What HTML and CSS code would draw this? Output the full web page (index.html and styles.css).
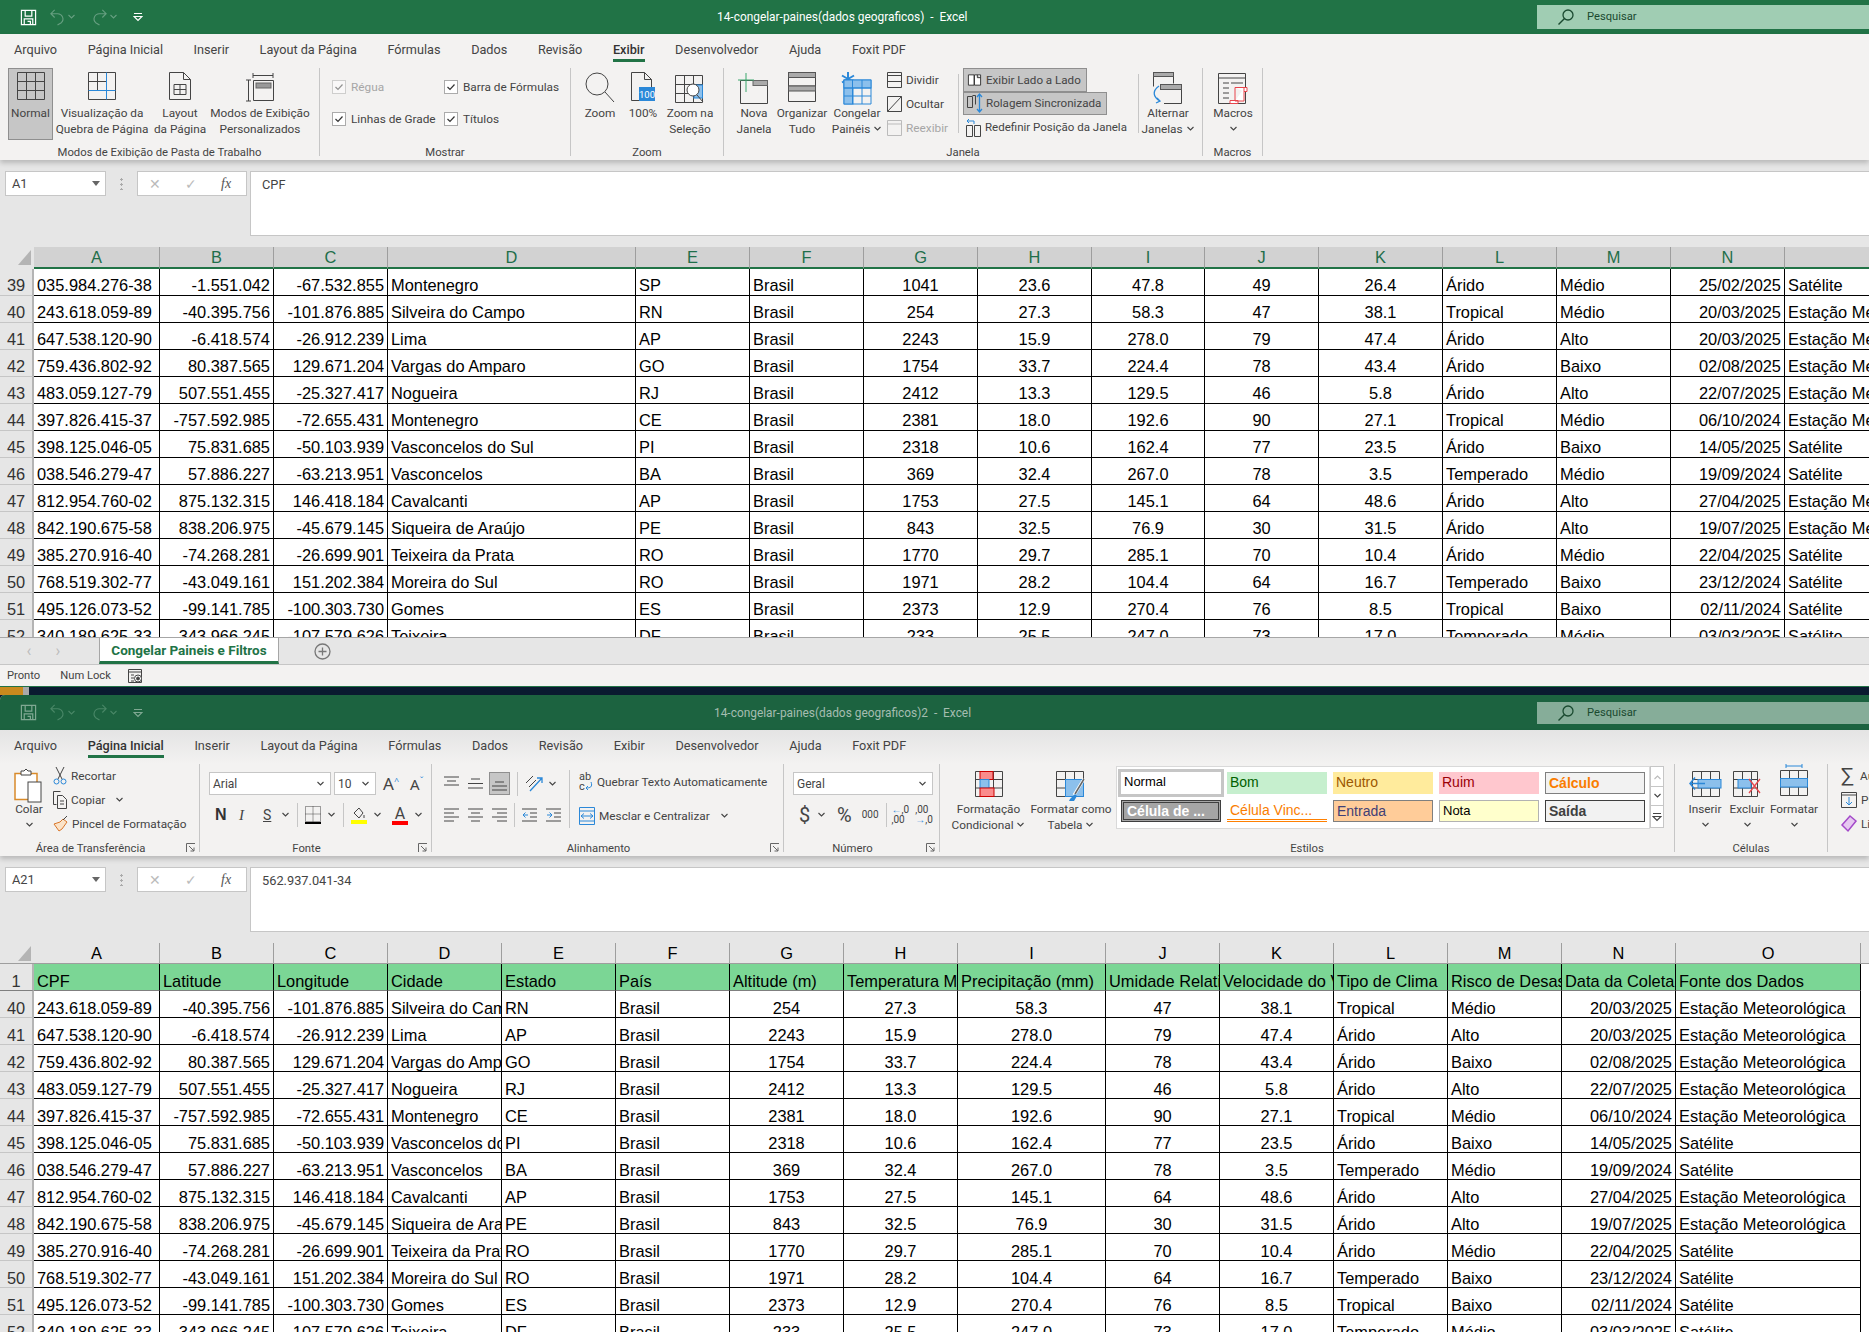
FILE: index.html
```html
<!DOCTYPE html>
<html lang="pt-BR">
<head>
<meta charset="utf-8">
<title>Excel</title>
<link rel="stylesheet" href="styles.css">
</head>
<body>
<svg class="defs" aria-hidden="true">
<symbol id="chev" viewBox="0 0 9 6"><path d="M1.500 1l3 3 3-3" fill="none" stroke="currentColor" stroke-width="1.100"/></symbol>
<symbol id="save" viewBox="0 0 18 18"><path d="M1.500 1.500h15v15h-15zM5.500 1.500v6h7v-6M4.500 16.500v-6h9v6M8 13h3v3.500" fill="none" stroke="currentColor" stroke-width="1.300"/></symbol>
<symbol id="undo" viewBox="0 0 18 18"><path d="M6 1L2 5l4 4M2 5h7a5.500 5.500 0 0 1 4 9.500L9 17" fill="none" stroke="currentColor" stroke-width="1.200"/></symbol>
<symbol id="redo" viewBox="0 0 18 18"><path d="M12 1l4 4-4 4M16 5H9a5.500 5.500 0 0 0-4 9.500L9 17" fill="none" stroke="currentColor" stroke-width="1.200"/></symbol>
<symbol id="cust" viewBox="0 0 10 10"><path d="M1 1.500h8M1 4.500h8L5 8.500z" fill="none" stroke="currentColor" stroke-width="1.200"/></symbol>
<symbol id="lens" viewBox="0 0 18 18"><circle cx="11" cy="7" r="5" fill="none" stroke="currentColor" stroke-width="1.300"/><path d="M7.500 10.500L1.500 16.500" stroke="currentColor" stroke-width="1.500"/></symbol>
<symbol id="check" viewBox="0 0 14 14"><rect x=".5" y=".5" width="13" height="13" fill="#fff" stroke="#ababab"/><path d="M3.500 7l2.500 2.500 4.500-5" fill="none" stroke="#333" stroke-width="1.200"/></symbol>
<symbol id="pages" viewBox="0 0 16 16"><path d="M1.500 2.500h6v11h-6zM8 2.500h6.500v11H8zM11 2.500v3h3.500" fill="#fff" stroke="#333"/></symbol>
<symbol id="launch" viewBox="0 0 10 10"><path d="M.5 9V.5H9M3 3l5 5M8 4.500V8H4.500" fill="none" stroke="#666"/></symbol>
</svg>

<section class="win win-a">
  <header class="titlebar tb-a">
    <div class="qat">
      <svg class="q-save"><use href="#save"/></svg>
      <svg class="q-undo dim"><use href="#undo"/></svg><svg class="c8 dim"><use href="#chev"/></svg>
      <svg class="q-undo dim"><use href="#redo"/></svg><svg class="c8 dim"><use href="#chev"/></svg>
      <svg class="q-cust"><use href="#cust"/></svg>
    </div>
    <div class="doc">14-congelar-paines(dados geograficos)&nbsp; -&nbsp; Excel</div>
    <div class="search"><svg class="s-lens"><use href="#lens"/></svg><span>Pesquisar</span></div>
  </header>
  <div class="ribbon">
    <nav class="tabs">
      <span>Arquivo</span><span>Página Inicial</span><span>Inserir</span><span>Layout da Página</span><span>Fórmulas</span><span>Dados</span><span>Revisão</span><span class="act">Exibir</span><span>Desenvolvedor</span><span>Ajuda</span><span>Foxit PDF</span>
    </nav>
    <div class="groups">
      <div class="grp w320">
        <div class="gbody pl8">
          <div class="big w45 on"><div class="ibox"><svg width="28" height="28" viewBox="0 0 28 28" class="ln"><path d="M.5.500h27v27H.5zM9.500.500v27M18.500.500v27M.5 9.500h27M.5 18.500h27"/></svg></div>Normal</div>
          <div class="big w98"><div class="ibox"><svg width="28" height="28" viewBox="0 0 28 28" class="ln"><path d="M.5.500h27v27H.5zM9.500.500v18M.5 9.500h18"/><path class="bl" d="M18.500.500v27M.5 18.500h27"/></svg></div>Visualização da<br>Quebra de Página</div>
          <div class="big w58"><div class="ibox"><svg width="22" height="28" viewBox="0 0 22 28" class="ln"><path d="M.5.500h14l7 7v20H.5zM14.500.500v7h7M5 12.500h12v10H5zM5 17.500h12M11 12.500v10"/></svg></div>Layout<br>da Página</div>
          <div class="big w102"><div class="ibox"><svg width="30" height="30" viewBox="0 0 30 30" class="ln"><path d="M8 1v5M28 1v5M8 3.500h20M1 8h5M1 29h5M3.500 8v21M8.500 8.500h20v20h-20z"/><rect x="11" y="11" width="15" height="5" fill="#999" stroke="#666"/></svg></div>Modos de Exibição<br>Personalizados</div>
        </div>
        <div class="glabel">Modos de Exibição de Pasta de Trabalho</div>
      </div>
      <div class="grp w251">
        <div class="gbody checks">
          <label class="chk off"><svg class="box"><use href="#check"/></svg>Régua</label>
          <label class="chk"><svg class="box"><use href="#check"/></svg>Barra de Fórmulas</label>
          <label class="chk"><svg class="box"><use href="#check"/></svg>Linhas de Grade</label>
          <label class="chk"><svg class="box"><use href="#check"/></svg>Títulos</label>
        </div>
        <div class="glabel">Mostrar</div>
      </div>
      <div class="grp w153">
        <div class="gbody pl8">
          <div class="big w42"><div class="ibox"><svg width="30" height="31" viewBox="0 0 30 31" class="ln"><circle cx="12" cy="12" r="11"/><path d="M20 20l9 10"/></svg></div>Zoom</div>
          <div class="big w44"><div class="ibox"><svg width="24" height="30" viewBox="0 0 24 30" class="ln"><path d="M.5.500h13l7 7v21H.5zM13.500.500v7h7"/><rect x="8" y="15" width="16" height="14" fill="#2b88d8" stroke="none"/><text x="16" y="26" class="t100">100</text></svg></div>100%</div>
          <div class="big w50"><div class="ibox"><svg width="30" height="31" viewBox="0 0 30 31" class="ln"><path d="M.5 3.500h27v27H.5zM9.500 3.500v27M18.500 3.500v27M.5 12.500h27M.5 21.500h27"/><rect x="19" y="13" width="8.500" height="13" fill="#8cc0ec" stroke="#2b88d8"/><circle cx="18" cy="18" r="6" fill="#fff"/><path d="M22 23l6 7"/></svg></div>Zoom na<br>Seleção</div>
        </div>
        <div class="glabel">Zoom</div>
      </div>
      <div class="grp w479">
        <div class="gbody pl10">
          <div class="big w40"><div class="ibox"><svg width="30" height="32" viewBox="0 0 30 32" class="ln"><path d="M1.500 8.500h27v23h-27z"/><rect x="14" y="8.500" width="14.500" height="5" fill="#aaa" stroke="#666"/><path class="gr" d="M7 1v19M-1 8h16"/></svg></div>Nova<br>Janela</div>
          <div class="big w56"><div class="ibox"><svg width="28" height="30" viewBox="0 0 28 30" class="ln"><path d="M.5.500h27v29H.5zM.5 14h27"/><rect x=".5" y=".5" width="27" height="5" fill="#aaa" stroke="#555"/><rect x=".5" y="14" width="27" height="5" fill="#aaa" stroke="#555"/></svg></div>Organizar<br>Tudo</div>
          <div class="big w54"><div class="ibox"><svg width="30" height="32" viewBox="0 0 30 32" class="ln"><path class="bl" d="M6 0v14M0 3.500l12 7M0 10.500l12-7" stroke-width="2"/><path d="M2 18.500V8h27v24H2z" stroke="#2b88d8"/><rect x="2" y="8" width="9" height="24" fill="#8cc0ec" stroke="#2b88d8"/><rect x="2" y="8" width="27" height="8" fill="#8cc0ec" stroke="#2b88d8"/><path d="M10.500 8v24M20 8v24M2 16h27M2 24h27" stroke="#2b88d8"/></svg></div>Congelar<br>Painéis <svg class="c8"><use href="#chev"/></svg></div>
          <div class="smalls w74 pl3">
            <div class="sm"><svg width="15" height="18" viewBox="0 0 15 18" class="ln"><path d="M.5 1.500h14v15H.5zM.5 4.500h14M.5 10.500h14"/></svg>Dividir</div>
            <div class="sm"><svg width="15" height="18" viewBox="0 0 15 18" class="ln"><path d="M.5 1.500h14v15H.5zM.5 16.500l14-15"/></svg>Ocultar</div>
            <div class="sm off"><svg width="15" height="18" viewBox="0 0 15 18" class="ln faint"><path d="M.5 1.500h14v15H.5zM.5 5h14"/></svg>Reexibir</div>
          </div>
          <div class="vsep"></div>
          <div class="smalls w175 ml4">
            <div class="sm on"><svg class="i15"><use href="#pages"/></svg>Exibir Lado a Lado</div>
            <div class="sm on"><svg width="15" height="20" viewBox="0 0 15 20" class="ln"><path d="M.5 3.500h5v11h-5zM5.500 2.500h3v9"/><path class="bl" d="M12.500 1v18M10 4l2.500-3 2.500 3M10 16l2.500 3 2.500-3" stroke-width="1.300"/></svg>Rolagem Sincronizada</div>
            <div class="sm rst"><svg width="15" height="20" viewBox="0 0 15 20" class="ln"><path d="M.5 8.500h6v11h-6zM8.500 8.500h6v11h-6z"/><path class="bl" d="M1 4h7v3M1 4l2-2M1 4l2 2"/></svg>Redefinir Posição da Janela</div>
          </div>
          <div class="vsep"></div>
          <div class="big w56 ml1"><div class="ibox"><svg width="30" height="32" viewBox="0 0 30 32" class="ln"><path d="M.5.500h20v11M.5.500v14"/><rect x=".5" y=".5" width="20" height="4" fill="#aaa" stroke="#555"/><path d="M7.500 12.500h21v19H11"/><rect x="7.500" y="12.500" width="21" height="5" fill="#aaa" stroke="#555"/><path class="bl" d="M6 14c-7 5-6 11 1 15M4 26l3 3-4 2" stroke-width="1.300"/></svg></div>Alternar<br>Janelas <svg class="c8"><use href="#chev"/></svg></div>
        </div>
        <div class="glabel">Janela</div>
      </div>
      <div class="grp w60">
        <div class="gbody">
          <div class="big w60"><div class="ibox"><svg width="32" height="32" viewBox="0 0 32 32" class="ln"><path d="M1.500 1.500h27v30h-27zM1.500 6h27M6 11h6M14 11h12M6 16h6M6 21h6M6 26h6"/><path d="M18 15.500h12v4h-3M18 15.500v13M27 16v13H18M13 28.500h8v3h-8z" fill="#fff" stroke="#e8454c"/></svg></div>Macros<br><svg class="c8"><use href="#chev"/></svg></div>
        </div>
        <div class="glabel">Macros</div>
      </div>
    </div>
  </div>
  <div class="fbar">
    <div class="namebox"><span>A1</span><i class="tri"></i></div>
    <div class="dots"></div>
    <div class="fxbox"><span class="fx-x">✕</span><span class="fx-c">✓</span><span class="fx-f">fx</span></div>
    <div class="fval">CPF</div>
  </div>
  <div class="sheet s-a">
<table class="grid g-a">
<colgroup><col class="c-rh"><col class="c-a"><col class="c-n"><col class="c-n"><col class="c-d"><col class="c-n"><col class="c-n"><col class="c-n"><col class="c-n"><col class="c-i"><col class="c-n"><col class="c-k"><col class="c-n"><col class="c-n"><col class="c-n"><col class="c-o"></colgroup>
<thead><tr><th class="corner"><svg width="13" height="16" viewBox="0 0 13 16"><path d="M0 16L13 1v15z"/></svg><th>A<th>B<th>C<th>D<th>E<th>F<th>G<th>H<th>I<th>J<th>K<th>L<th>M<th>N<th>O</thead>
<tbody>
<tr><th>39<td>035.984.276-38<td>-1.551.042<td>-67.532.855<td>Montenegro<td>SP<td>Brasil<td>1041<td>23.6<td>47.8<td>49<td>26.4<td>Árido<td>Médio<td>25/02/2025<td>Satélite
<tr><th>40<td>243.618.059-89<td>-40.395.756<td>-101.876.885<td>Silveira do Campo<td>RN<td>Brasil<td>254<td>27.3<td>58.3<td>47<td>38.1<td>Tropical<td>Médio<td>20/03/2025<td>Estação Meteorológica
<tr><th>41<td>647.538.120-90<td>-6.418.574<td>-26.912.239<td>Lima<td>AP<td>Brasil<td>2243<td>15.9<td>278.0<td>79<td>47.4<td>Árido<td>Alto<td>20/03/2025<td>Estação Meteorológica
<tr><th>42<td>759.436.802-92<td>80.387.565<td>129.671.204<td>Vargas do Amparo<td>GO<td>Brasil<td>1754<td>33.7<td>224.4<td>78<td>43.4<td>Árido<td>Baixo<td>02/08/2025<td>Estação Meteorológica
<tr><th>43<td>483.059.127-79<td>507.551.455<td>-25.327.417<td>Nogueira<td>RJ<td>Brasil<td>2412<td>13.3<td>129.5<td>46<td>5.8<td>Árido<td>Alto<td>22/07/2025<td>Estação Meteorológica
<tr><th>44<td>397.826.415-37<td>-757.592.985<td>-72.655.431<td>Montenegro<td>CE<td>Brasil<td>2381<td>18.0<td>192.6<td>90<td>27.1<td>Tropical<td>Médio<td>06/10/2024<td>Estação Meteorológica
<tr><th>45<td>398.125.046-05<td>75.831.685<td>-50.103.939<td>Vasconcelos do Sul<td>PI<td>Brasil<td>2318<td>10.6<td>162.4<td>77<td>23.5<td>Árido<td>Baixo<td>14/05/2025<td>Satélite
<tr><th>46<td>038.546.279-47<td>57.886.227<td>-63.213.951<td>Vasconcelos<td>BA<td>Brasil<td>369<td>32.4<td>267.0<td>78<td>3.5<td>Temperado<td>Médio<td>19/09/2024<td>Satélite
<tr><th>47<td>812.954.760-02<td>875.132.315<td>146.418.184<td>Cavalcanti<td>AP<td>Brasil<td>1753<td>27.5<td>145.1<td>64<td>48.6<td>Árido<td>Alto<td>27/04/2025<td>Estação Meteorológica
<tr><th>48<td>842.190.675-58<td>838.206.975<td>-45.679.145<td>Siqueira de Araújo<td>PE<td>Brasil<td>843<td>32.5<td>76.9<td>30<td>31.5<td>Árido<td>Alto<td>19/07/2025<td>Estação Meteorológica
<tr><th>49<td>385.270.916-40<td>-74.268.281<td>-26.699.901<td>Teixeira da Prata<td>RO<td>Brasil<td>1770<td>29.7<td>285.1<td>70<td>10.4<td>Árido<td>Médio<td>22/04/2025<td>Satélite
<tr><th>50<td>768.519.302-77<td>-43.049.161<td>151.202.384<td>Moreira do Sul<td>RO<td>Brasil<td>1971<td>28.2<td>104.4<td>64<td>16.7<td>Temperado<td>Baixo<td>23/12/2024<td>Satélite
<tr><th>51<td>495.126.073-52<td>-99.141.785<td>-100.303.730<td>Gomes<td>ES<td>Brasil<td>2373<td>12.9<td>270.4<td>76<td>8.5<td>Tropical<td>Baixo<td>02/11/2024<td>Satélite
<tr><th>52<td>340.189.625-33<td>343.966.245<td>-107.579.626<td>Teixeira<td>DF<td>Brasil<td>233<td>25.5<td>247.0<td>73<td>17.0<td>Temperado<td>Médio<td>03/03/2025<td>Satélite
</tbody>
</table>
  </div>
  <div class="sheetbar">
    <span class="nav">‹</span><span class="nav">›</span>
    <div class="stab">Congelar Paineis e Filtros</div>
    <svg class="plus" width="17" height="17" viewBox="0 0 17 17"><circle cx="8.500" cy="8.500" r="7.500"/><path d="M8.500 4.500v8M4.500 8.500h8"/></svg>
  </div>
  <footer class="status"><span>Pronto</span><span>Num Lock</span><svg width="15" height="16" viewBox="0 0 15 16" class="ln"><path d="M.5 1.500h13v13H.5zM.5 4h13M3 7h3M3 10h3M3 13h3"/><circle cx="10" cy="10.500" r="3.500" fill="#fff"/><circle cx="10" cy="10.500" r="1.500" fill="#444"/></svg></footer>
</section>

<div class="strip"><i class="s-or"></i><i class="s-gr"></i></div>

<section class="win win-b">
  <header class="titlebar tb-b">
    <div class="qat">
      <svg class="q-save"><use href="#save"/></svg>
      <svg class="q-undo dim"><use href="#undo"/></svg><svg class="c8 dim"><use href="#chev"/></svg>
      <svg class="q-undo dim"><use href="#redo"/></svg><svg class="c8 dim"><use href="#chev"/></svg>
      <svg class="q-cust"><use href="#cust"/></svg>
    </div>
    <div class="doc">14-congelar-paines(dados geograficos)2&nbsp; -&nbsp; Excel</div>
    <div class="search"><svg class="s-lens"><use href="#lens"/></svg><span>Pesquisar</span></div>
  </header>
  <div class="ribbon rb-b">
    <nav class="tabs">
      <span>Arquivo</span><span class="act">Página Inicial</span><span>Inserir</span><span>Layout da Página</span><span>Fórmulas</span><span>Dados</span><span>Revisão</span><span>Exibir</span><span>Desenvolvedor</span><span>Ajuda</span><span>Foxit PDF</span>
    </nav>
    <div class="groups">
      <div class="grp w200">
        <div class="gbody pl8">
          <div class="big w42"><div class="ibox"><svg width="30" height="32" viewBox="0 0 30 32" class="ln"><path d="M1 5.500h22v26H1z" stroke="#d98b2b" fill="#fff" stroke-width="1.500"/><path d="M7 5V3h3l2-2 2 2h3v4H7z" fill="#fff"/><rect x="14" y="14" width="13" height="20" fill="#fff"/></svg></div>Colar<br><svg class="c8"><use href="#chev"/></svg></div>
          <div class="smalls w146 pl3">
            <div class="sm"><svg width="14" height="18" viewBox="0 0 14 18" class="ln"><path d="M3 0l6 12M11 0L5 12"/><circle cx="3.500" cy="14.500" r="2.500" stroke="#2b88d8"/><circle cx="10.500" cy="14.500" r="2.500" stroke="#2b88d8"/></svg>Recortar</div>
            <div class="sm"><svg width="14" height="18" viewBox="0 0 14 18" class="ln"><path d="M.5.500h7M.5.500v13h3M4.500 4.500h5l4 4v9h-9zM7 10h4M7 13h4"/></svg>Copiar &nbsp;<svg class="c8"><use href="#chev"/></svg></div>
            <div class="sm"><svg width="15" height="18" viewBox="0 0 15 18" class="ln"><path d="M1 9l5 7 3-2 5-7-4-3-3 3z" stroke="#d9772b" fill="#fbe3c8"/><path d="M10 5l4-4"/></svg>Pincel de Formatação</div>
          </div>
        </div>
        <div class="glabel lab-l">Área de Transferência<svg class="launch"><use href="#launch"/></svg></div>
      </div>
      <div class="grp w232">
        <div class="gbody col">
          <div class="frow fr1">
            <div class="sel w122"><span>Arial</span><svg class="c8"><use href="#chev"/></svg></div>
            <div class="sel w42"><span>10</span><svg class="c8"><use href="#chev"/></svg></div>
            <span class="grow">A<sup>^</sup></span><span class="shrink">A<sup>ˇ</sup></span>
          </div>
          <div class="frow fr2">
            <b class="fN">N</b><i class="fI">I</i><u class="fS">S</u><svg class="c8"><use href="#chev"/></svg>
            <span class="hsep"></span>
            <svg width="16" height="18" viewBox="0 0 16 18" class="ln"><path d="M.5.500h15v15H.5zM8 .5v15M.5 8h15" stroke-dasharray="1 1"/><path d="M0 17h16" stroke="#000" stroke-width="2"/></svg><svg class="c8"><use href="#chev"/></svg>
            <span class="hsep"></span>
            <svg width="16" height="18" viewBox="0 0 16 18" class="ln"><path d="M3 7l5-5 4 5-4 5zM13 9v3"/><rect x="0" y="14" width="16" height="4" fill="#ffff00" stroke="none"/></svg><svg class="c8"><use href="#chev"/></svg>
            <span class="fcolor">A</span><svg class="c8"><use href="#chev"/></svg>
          </div>
        </div>
        <div class="glabel lab-l">Fonte<svg class="launch"><use href="#launch"/></svg></div>
      </div>
      <div class="grp w352">
        <div class="gbody">
          <div class="acol">
            <div class="arow ar1">
              <svg class="al" viewBox="0 0 15 15"><path d="M0 1h15M3 5h9M0 9h15"/></svg>
              <svg class="al" viewBox="0 0 15 15"><path d="M3 3h9M0 7.500h15M0 12h15"/></svg>
              <span class="alon"><svg class="al" viewBox="0 0 15 15"><path d="M3 6h9M0 10h15M0 14h15"/></svg></span>
              <span class="hsep"></span>
              <svg width="18" height="18" viewBox="0 0 18 18" class="ln"><path d="M1 8l7-7M4 12l7-7"/><path class="bl" d="M5 16L17 3M12 3h5v5" stroke-width="1.300"/></svg><svg class="c8 tight"><use href="#chev"/></svg>
            </div>
            <div class="arow ar2">
              <svg class="al" viewBox="0 0 15 15"><path d="M0 1h15M0 5h10M0 9h15M0 13h10"/></svg>
              <svg class="al" viewBox="0 0 15 15"><path d="M0 1h15M3 5h9M0 9h15M3 13h9"/></svg>
              <svg class="al" viewBox="0 0 15 15"><path d="M0 1h15M5 5h10M0 9h15M5 13h10"/></svg>
              <span class="hsep"></span>
              <svg class="al" viewBox="0 0 15 15"><path d="M0 1h15M8 5h7M8 9h7M0 13h15"/><path class="bl" d="M6 7H1M3.500 4.500L1 7l2.500 2.500"/></svg>
              <svg class="al" viewBox="0 0 15 15"><path d="M0 1h15M8 5h7M8 9h7M0 13h15"/><path class="bl" d="M1 7h5M3.500 4.500L6 7 3.500 9.500"/></svg>
            </div>
          </div>
          <div class="vsep v2"></div>
          <div class="wrapcol">
            <div class="wr"><svg width="14" height="20" viewBox="0 0 14 20" class="ln"><text x="0" y="8" class="tab">ab</text><text x="0" y="18" class="tab">c</text><path class="bl" d="M12 10c2 5-1 6-5 6M9 14l-2 2 2 2"/></svg>Quebrar Texto Automaticamente</div>
            <div class="wr"><svg width="16" height="18" viewBox="0 0 16 18" class="ln"><path d="M.5.500h15v17H.5zM.5 4h15M.5 14h15" stroke="#2b88d8"/><path class="bl" d="M2 9h12M5 6.500L2 9l3 2.500M11 6.500L14 9l-3 2.500"/></svg>Mesclar e Centralizar <svg class="c8 ml8"><use href="#chev"/></svg></div>
          </div>
        </div>
        <div class="glabel lab-l">Alinhamento<svg class="launch"><use href="#launch"/></svg></div>
      </div>
      <div class="grp w156">
        <div class="gbody col">
          <div class="frow fr3"><div class="sel w140"><span>Geral</span><svg class="c8"><use href="#chev"/></svg></div></div>
          <div class="frow fr4">
            <span class="dol">$</span><svg class="c8"><use href="#chev"/></svg><span class="pct">%</span><span class="mil">000</span><span class="hsep"></span>
            <span class="dec"><em>←</em>,0<br>,00</span><span class="dec">,00<br><em>→</em>,0</span>
          </div>
        </div>
        <div class="glabel lab-l">Número<svg class="launch"><use href="#launch"/></svg></div>
      </div>
      <div class="grp w735">
        <div class="gbody pl8">
          <div class="big w81"><div class="ibox ib-s"><svg width="28" height="26" viewBox="0 0 28 26" class="ln"><path d="M.5.500h27v25H.5zM.5 8.500h27M.5 17h27M9.500.500v25M18.500.500v25"/><rect x="5" y=".5" width="13" height="8" fill="#fa8c8c" stroke="#c00"/><rect x="5" y="8.500" width="9" height="8.500" fill="#8cc0ec" stroke="#2b88d8"/><rect x="5" y="17" width="14" height="8.500" fill="#fa8c8c" stroke="#c00"/></svg></div>Formatação<br>Condicional <svg class="c8"><use href="#chev"/></svg></div>
          <div class="big w84"><div class="ibox ib-s"><svg width="30" height="32" viewBox="0 0 30 32" class="ln"><path d="M.5.500h27v25H.5zM.5 8.500h27M.5 17h27M9.500.500v25M18.500.500v25"/><rect x="9.500" y="8.500" width="18" height="17" fill="#8cc0ec" stroke="#2b88d8"/><path d="M28 8L18 24" stroke-width="3" stroke="#fff"/><path d="M28 8L19 23" stroke-width="1.500" stroke="#666"/><path d="M14 28l5-5 2 2-3 5h-5z" fill="#2b88d8" stroke="none"/></svg></div>Formatar como<br>Tabela <svg class="c8"><use href="#chev"/></svg></div>
          <div class="gallery">
            <div class="styles">
              <span class="st st-normal">Normal</span><span class="st st-bom">Bom</span><span class="st st-neu">Neutro</span><span class="st st-ruim">Ruim</span><span class="st st-calc">Cálculo</span>
              <span class="st st-cel">Célula de ...</span><span class="st st-vinc">Célula Vinc...</span><span class="st st-ent">Entrada</span><span class="st st-nota">Nota</span><span class="st st-said">Saída</span>
            </div>
            <div class="gscroll"><span class="gs1"><svg class="c8 up"><use href="#chev"/></svg></span><span class="gs2"><svg class="c8"><use href="#chev"/></svg></span><span class="gs3"><svg class="c8"><use href="#cust"/></svg></span></div>
          </div>
        </div>
        <div class="glabel">Estilos</div>
      </div>
      <div class="grp w153">
        <div class="gbody pl7">
          <div class="big w46"><div class="ibox ib-s"><svg width="32" height="26" viewBox="0 0 32 26" class="ln"><path d="M3.500.500h27v25h-27zM3.500 8.500h27M3.500 17h27M12.500.500v25M21.500.500v25"/><rect x="9" y="8.500" width="23" height="8.500" fill="#8cc0ec" stroke="#2b88d8"/><path class="bl" d="M16 12.500H1M6 6.500l-5 6 5 6" stroke-width="1.500"/></svg></div>Inserir<br><svg class="c8"><use href="#chev"/></svg></div>
          <div class="big w38"><div class="ibox ib-s"><svg width="28" height="26" viewBox="0 0 28 26" class="ln"><path d="M.5.500h24v25H.5zM.5 8.500h24M.5 17h24M9.500.500v25M18.500.500v25" /><rect x="5" y="8.500" width="13" height="8.500" fill="#8cc0ec" stroke="#2b88d8"/><path d="M16 8l11 14M27 8L16 22" stroke="#e8454c" stroke-width="1.300"/></svg></div>Excluir<br><svg class="c8"><use href="#chev"/></svg></div>
          <div class="big w56"><div class="ibox ib-t"><svg width="28" height="32" viewBox="0 0 28 32" class="ln"><path class="bl" d="M6 0v4M22 0v4M6 2h16"/><path d="M.5 6.500h27v25H.5zM.5 14.500h27M.5 23h27M9.500 6.500v25M18.500 6.500v25"/><rect x=".5" y="14.500" width="27" height="8.500" fill="#8cc0ec" stroke="#2b88d8"/></svg></div>Formatar<br><svg class="c8"><use href="#chev"/></svg></div>
        </div>
        <div class="glabel">Células</div>
      </div>
      <div class="grp grest">
        <div class="gbody">
          <div class="smalls pl12">
            <div class="sm s-sig"><span class="sig">∑</span>AutoSoma</div>
            <div class="sm"><svg width="16" height="16" viewBox="0 0 16 16" class="ln"><path d="M.5.500h15v15H.5zM.5 3h15"/><path class="bl" d="M8 5v8M5 10l3 3 3-3"/></svg>Preencher</div>
            <div class="sm"><svg width="16" height="18" viewBox="0 0 16 18" class="ln"><path d="M1 10l8-9 6 5-8 10z" stroke="#a349c9" fill="#e6c8f0" stroke-width="1.500"/></svg>Limpar</div>
          </div>
        </div>
        <div class="glabel"></div>
      </div>
    </div>
  </div>
  <div class="fbar">
    <div class="namebox"><span>A21</span><i class="tri"></i></div>
    <div class="dots"></div>
    <div class="fxbox"><span class="fx-x">✕</span><span class="fx-c">✓</span><span class="fx-f">fx</span></div>
    <div class="fval">562.937.041-34</div>
  </div>
  <div class="sheet">
<table class="grid g-b">
<colgroup><col class="c-rh"><col class="c-a"><col class="c-n"><col class="c-n"><col class="c-n"><col class="c-n"><col class="c-n"><col class="c-n"><col class="c-n"><col class="c-w"><col class="c-n"><col class="c-n"><col class="c-n"><col class="c-n"><col class="c-n"><col class="c-o"><col class="c-n"></colgroup>
<thead><tr><th class="corner"><svg width="13" height="16" viewBox="0 0 13 16"><path d="M0 16L13 1v15z"/></svg><th>A<th>B<th>C<th>D<th>E<th>F<th>G<th>H<th>I<th>J<th>K<th>L<th>M<th>N<th>O<th class="blank"></thead>
<tbody>
<tr class="head"><th>1<td>CPF<td>Latitude<td>Longitude<td>Cidade<td>Estado<td>País<td>Altitude (m)<td>Temperatura Média<td>Precipitação (mm)<td>Umidade Relativa<td>Velocidade do Vento<td>Tipo de Clima<td>Risco de Desastre<td>Data da Coleta<td>Fonte dos Dados
<tr><th>40<td>243.618.059-89<td>-40.395.756<td>-101.876.885<td>Silveira do Campo<td>RN<td>Brasil<td>254<td>27.3<td>58.3<td>47<td>38.1<td>Tropical<td>Médio<td>20/03/2025<td>Estação Meteorológica
<tr><th>41<td>647.538.120-90<td>-6.418.574<td>-26.912.239<td>Lima<td>AP<td>Brasil<td>2243<td>15.9<td>278.0<td>79<td>47.4<td>Árido<td>Alto<td>20/03/2025<td>Estação Meteorológica
<tr><th>42<td>759.436.802-92<td>80.387.565<td>129.671.204<td>Vargas do Amparo<td>GO<td>Brasil<td>1754<td>33.7<td>224.4<td>78<td>43.4<td>Árido<td>Baixo<td>02/08/2025<td>Estação Meteorológica
<tr><th>43<td>483.059.127-79<td>507.551.455<td>-25.327.417<td>Nogueira<td>RJ<td>Brasil<td>2412<td>13.3<td>129.5<td>46<td>5.8<td>Árido<td>Alto<td>22/07/2025<td>Estação Meteorológica
<tr><th>44<td>397.826.415-37<td>-757.592.985<td>-72.655.431<td>Montenegro<td>CE<td>Brasil<td>2381<td>18.0<td>192.6<td>90<td>27.1<td>Tropical<td>Médio<td>06/10/2024<td>Estação Meteorológica
<tr><th>45<td>398.125.046-05<td>75.831.685<td>-50.103.939<td>Vasconcelos do Sul<td>PI<td>Brasil<td>2318<td>10.6<td>162.4<td>77<td>23.5<td>Árido<td>Baixo<td>14/05/2025<td>Satélite
<tr><th>46<td>038.546.279-47<td>57.886.227<td>-63.213.951<td>Vasconcelos<td>BA<td>Brasil<td>369<td>32.4<td>267.0<td>78<td>3.5<td>Temperado<td>Médio<td>19/09/2024<td>Satélite
<tr><th>47<td>812.954.760-02<td>875.132.315<td>146.418.184<td>Cavalcanti<td>AP<td>Brasil<td>1753<td>27.5<td>145.1<td>64<td>48.6<td>Árido<td>Alto<td>27/04/2025<td>Estação Meteorológica
<tr><th>48<td>842.190.675-58<td>838.206.975<td>-45.679.145<td>Siqueira de Araújo<td>PE<td>Brasil<td>843<td>32.5<td>76.9<td>30<td>31.5<td>Árido<td>Alto<td>19/07/2025<td>Estação Meteorológica
<tr><th>49<td>385.270.916-40<td>-74.268.281<td>-26.699.901<td>Teixeira da Prata<td>RO<td>Brasil<td>1770<td>29.7<td>285.1<td>70<td>10.4<td>Árido<td>Médio<td>22/04/2025<td>Satélite
<tr><th>50<td>768.519.302-77<td>-43.049.161<td>151.202.384<td>Moreira do Sul<td>RO<td>Brasil<td>1971<td>28.2<td>104.4<td>64<td>16.7<td>Temperado<td>Baixo<td>23/12/2024<td>Satélite
<tr><th>51<td>495.126.073-52<td>-99.141.785<td>-100.303.730<td>Gomes<td>ES<td>Brasil<td>2373<td>12.9<td>270.4<td>76<td>8.5<td>Tropical<td>Baixo<td>02/11/2024<td>Satélite
<tr><th>52<td>340.189.625-33<td>343.966.245<td>-107.579.626<td>Teixeira<td>DF<td>Brasil<td>233<td>25.5<td>247.0<td>73<td>17.0<td>Temperado<td>Médio<td>03/03/2025<td>Satélite
</tbody>
</table>
  </div>
</section>
</body>
</html>
```
FILE: styles.css
```css
*{box-sizing:border-box}
html,body{margin:0;height:100%}
body{width:1869px;height:1332px;overflow:hidden;background:#0a1a30;display:flex;flex-direction:column;font:11.800px/16px Roboto,"Open Sans",sans-serif;color:#444}
.defs{width:0;height:0;position:absolute}
.win{background:#e6e6e6;display:flex;flex-direction:column;overflow:hidden}
.win-a{height:687px;flex:none}
.win-b{flex:1;min-height:0;border-top-left-radius:5px}
.strip{height:8px;flex:none;display:flex}
.s-or{width:23px;background:#c88a1e}
.s-gr{width:6px;background:#a9a9a9}

.titlebar{display:grid;grid-template-columns:717px 820px 332px;align-items:center;flex:none;color:#fff}
.tb-a{height:34px;background:#217346}
.tb-b{height:35px;background:#1c6340;color:#a5bdb0;grid-template-columns:714px 823px 332px}
.qat{display:flex;align-items:center;padding-left:20px;color:#fff}
.tb-b .qat{color:#7fa892}
.q-save{width:17px;height:17px;margin-right:12px}
.q-undo{width:17px;height:17px;margin-right:1px}
.c8{width:9px;height:6px;color:#444;flex:none;vertical-align:1px}
.qat .c8{color:inherit;margin-right:15px}
.qat .dim{color:#6ea487;opacity:.9}
.tb-b .qat .dim{color:#4e8b6b}
.q-cust{width:10px;height:10px}
.doc{font-size:11.900px;white-space:nowrap}
.search{height:24px;background:#a0cdb3;color:#1a4a30;display:flex;align-items:center;padding-left:20px;gap:12px;font-size:11.200px}
.tb-b .search{height:22px;background:#86ad99}
.s-lens{width:18px;height:18px}

.ribbon{height:126px;flex:none;background:#f3f2f1;position:relative;box-shadow:0 3px 5px rgba(0,0,0,.2);z-index:1}
.rb-b{background:linear-gradient(#e4e4e4,#f3f2f1 34px)}
.tabs{display:flex;gap:30.600px;padding-left:14px;height:28px;white-space:nowrap;font-size:12.700px}
.tabs span{height:28px;line-height:31px;border-bottom:3px solid transparent}
.tabs .act{font-weight:500;border-bottom-color:#217346;color:#333}
.groups{display:flex;margin-top:6px;height:88px}
.grp{flex:none;display:flex;flex-direction:column;border-right:1px solid #c6c6c6}
.grest{border-right:0;flex:1}
.w320{width:320px}.w251{width:251px}.w153{width:153px}.w479{width:479px}.w60{width:60px}
.w200{width:200px}.w232{width:232px}.w352{width:352px}.w156{width:156px}.w735{width:735px}
.gbody{height:75px;display:flex;flex:none}
.col{flex-direction:column}
.glabel{height:13px;line-height:20px;text-align:center;position:relative;white-space:nowrap;color:#444;font-size:11.300px}
.lab-l{padding-right:18px}
.launch{position:absolute;right:3px;top:4px;width:10px;height:10px}
.pl7{padding-left:7px}.pl8{padding-left:8px}.pl10{padding-left:10px}.pl3{padding-left:3px}.pl12{padding-left:13px}
.ml1{margin-left:1px}.ml4{margin-left:4px}.ml8{margin-left:6px}

.big{flex:none;text-align:center;white-space:nowrap;height:75px;padding-top:4px;line-height:16px}
.big .c8{vertical-align:1px}
.ibox{height:33px;display:flex;justify-content:center;align-items:flex-start}
.ib-s{padding-top:3px}
.ib-t{margin-top:-4px;height:37px}
.big.on{background:#c6c6c6;border:1px solid #8f8f8f;height:72px;padding-top:3px}
.w42{width:42px}.w44{width:44px}.w45{width:45px}.w50{width:50px}.w54{width:54px}.w56{width:56px}.w58{width:58px}
.w40{width:40px}.w38{width:38px}.w46{width:46px}.w81{width:81px}.w84{width:84px}.w98{width:98px}.w102{width:102px}
.w74{width:74px}.w175{width:175px}.w146{width:146px}.w122{width:122px}.w140{width:140px}
.ln{fill:none;stroke:#444;overflow:visible;flex:none}
.ln .bl,.bl{stroke:#2b88d8;fill:none}
.gr{stroke:#3aa76d}
.faint{stroke:#bbb}
.t100{fill:#fff;stroke:none;font:9.500px Roboto,sans-serif;text-anchor:middle}
.tab{fill:#444;stroke:none;font:11px Roboto,sans-serif}

.checks{display:grid;grid-template-columns:112px 112px;grid-auto-rows:32px;padding:3px 0 0 12px;align-items:center}
.chk{display:flex;align-items:center;gap:5px;white-space:nowrap}
.box{width:14px;height:14px;flex:none}
.off{color:#a6a6a6}
.chk.off .box{opacity:.5}

.smalls{flex:none;display:flex;flex-direction:column}
.sm{height:24px;display:flex;align-items:center;gap:4px;white-space:nowrap;flex:none}
.sm.on{background:#c6c6c6;border:1px solid #8f8f8f;width:fit-content;padding:0 5px 0 3px;height:23.500px;font-size:11.600px}
.rst{padding-left:3px;font-size:11.500px}
.i15{width:15px;height:16px}
.vsep{width:1px;background:#c6c6c6;height:59px;margin-top:6px;flex:none}
.v2{height:58px;margin-top:6px}

.frow{display:flex;align-items:center;flex:none}
.fr1{height:23px;margin-top:8px;padding-left:9px;gap:3px}
.fr2{height:24px;margin-top:8px;padding-left:15px}
.fr3{height:23px;margin-top:8px;padding-left:9px}
.fr4{height:24px;margin-top:8px;padding-left:15px}
.sel{height:23px;border:1px solid #c6c6c6;background:#fff;display:flex;align-items:center;justify-content:space-between;padding:0 5px 0 3px;font-size:12px}
.grow,.shrink{font:17px "Noto Sans",sans-serif;color:#444;white-space:nowrap}
.grow{margin-left:4px}.shrink{margin-left:8px;font-size:15px}
.grow sup,.shrink sup{font-size:9px;vertical-align:6px;line-height:0;color:#2b88d8}
.fN{font:700 16px "Liberation Sans",sans-serif;color:#333;width:24px}
.fI{font:italic 15px "Liberation Serif",serif;width:24px}
.fS{font:14px Roboto,sans-serif;width:18px}
.hsep{width:1px;height:24px;background:#c6c6c6;flex:none;margin:0 7px}
.fr2 .c8{margin-left:0}
.fr2 svg+.c8{margin-left:6px}
.fcolor{font:16px Roboto,sans-serif;border-bottom:4px solid #f00;line-height:15px;width:16px;text-align:center;margin:0 6px 0 10px}
.acol{width:137px;flex:none;padding-left:12px}
.arow{display:flex;align-items:center;height:24px;gap:9px}
.ar1{margin-top:8px;height:23px}
.ar2{margin-top:8px;height:24px}
.al{width:15px;height:15px;fill:none;stroke:#444;flex:none}
.alon{width:21px;height:23px;background:#c6c6c6;border:1px solid #8f8f8f;display:flex;align-items:center;justify-content:center;margin-left:-3px;flex:none}
.arow .hsep{margin:0 -2px}
.tight{margin-left:-4px}
.wrapcol{padding:1px 0 0 9px;flex:none}
.wr{height:34px;display:flex;align-items:center;gap:4px;white-space:nowrap}
.dol{font:20px Roboto,sans-serif;margin-right:8px;width:10px}
.pct{font:20px Roboto,sans-serif;margin-left:11px;width:22px}
.mil{font-size:10px;margin-left:3px;width:19px}
.fr4 .hsep{margin:0 5px}
.dec{font-size:10px;line-height:10px;width:24px;white-space:nowrap}
.dec em{color:#2b88d8;font-style:normal}

.gallery{margin:2px 0 0 3px;height:63px;display:flex;flex:none}
.styles{width:534px;height:63px;background:#fff;border:1px solid #d9d9d9;display:grid;grid-template-columns:repeat(5,100px);grid-auto-rows:22px;gap:6px;padding:5px 0 0 4px}
.st{font:14px/20px "Liberation Sans",sans-serif;padding:0 3px;white-space:nowrap;overflow:hidden}
.st-normal{color:#000;background:#fff;outline:3px solid #c6c6c6;font-size:13px}
.st-bom{background:#c6efce;color:#006100}
.st-neu{background:#ffeb9c;color:#9c5700}
.st-ruim{background:#ffc7ce;color:#9c0006}
.st-calc{background:#f2f2f2;color:#fa7d00;font-weight:700;border:1px solid #7f7f7f}
.st-cel{background:#a5a5a5;color:#fff;font-weight:700;border:3px double #3f3f3f;line-height:16px}
.st-vinc{color:#fa7d00;border-bottom:3px double #ff8001}
.st-ent{background:#fc9;color:#3f3f76;border:1px solid #7f7f7f}
.st-nota{background:#ffc;color:#000;border:1px solid #b2b2b2;font-size:13px}
.st-said{background:#f2f2f2;color:#3f3f3f;font-weight:700;border:1px solid #3f3f3f}
.gscroll{width:14px;display:flex;flex-direction:column;flex:none}
.gscroll span{display:flex;align-items:center;justify-content:center;border:1px solid #c6c6c6;background:#fff;margin-bottom:-1px}
.gs1{height:21px}.gs2{height:20px}.gs3{height:23px}
.gs1 .c8{transform:rotate(180deg);color:#bbb}
.gs3 svg{width:10px;height:10px;color:#444}
.s-sig .sig{font-size:21px;width:15px}

.fbar{height:87px;flex:none;display:flex;align-items:flex-start;padding:11px 0 0 5px;background:#e6e6e6;color:#444;font-size:12.800px}
.namebox{width:101px;height:25px;background:#fff;border:1px solid #c6c6c6;display:flex;align-items:center;justify-content:space-between;padding:0 5px 0 6px;flex:none}
.tri{width:0;height:0;border:4px solid transparent;border-top:5px solid #666;border-bottom:0}
.dots{width:31px;height:13px;margin-top:6px;flex:none;background:radial-gradient(circle at center,#aaa 1px,transparent 1.300px) center top/31px 5px repeat-y}
.fxbox{width:110px;height:25px;background:#fff;border:1px solid #c6c6c6;display:flex;align-items:center;flex:none;color:#bbb;padding-left:11px;font-size:14px}
.fx-x{width:36px}.fx-c{width:36px}
.fx-f{font:italic 14px "Liberation Serif",serif;color:#555}
.fval{flex:1;height:65px;margin-left:3px;background:#fff;border:1px solid #c6c6c6;border-right:0;padding:4px 0 0 11px;line-height:17px}

.sheet{flex:1;min-height:0;overflow:hidden;background:#fff}
.grid{border-collapse:separate;border-spacing:0;table-layout:fixed;font:16.400px/18px "Liberation Sans",sans-serif;color:#000}
.g-a{width:1970px}
.g-b{width:1975px}
.c-rh{width:34px}.c-a{width:126px}.c-n{width:114px}.c-d{width:248px}.c-i{width:113px}.c-k{width:124px}.c-o{width:185px}.c-w{width:148px}
.grid td{height:27px;padding:0 3px;border-right:1px solid #000;border-bottom:1px solid #000;white-space:nowrap;overflow:hidden;vertical-align:bottom}
.grid tbody th{font-weight:400;background:#e6e6e6;color:#333;border-right:2px solid #b4b4b4;border-bottom:1px solid #c6c6c6;padding:0;text-align:center;vertical-align:bottom;height:27px}
.g-a td{padding-bottom:1px}
.grid.g-a tbody th{padding-bottom:1px}
.grid thead th{height:21px;font-weight:400;padding:0;text-align:center;vertical-align:bottom;overflow:hidden;white-space:nowrap;line-height:20px;border-right:1px solid #9e9e9e;background:#e6e6e6;color:#000;border-bottom:1px solid #9e9e9e}
.g-a thead th{background:#d2d2d2;color:#1f6e4a;border-bottom:2px solid #217346}
.grid thead .corner{background:#e6e6e6;border-right:0;text-align:right;padding:0 3px 2px 0;line-height:0}
.g-a thead .corner{border-bottom-color:#e6e6e6;background:#e6e6e6}
.corner path{fill:#b4b4b4}
.grid td:nth-child(3),.grid td:nth-child(4),.grid td:nth-child(15){text-align:right}
.grid td:nth-child(8),.grid td:nth-child(9),.grid td:nth-child(10),.grid td:nth-child(11),.grid td:nth-child(12){text-align:center}
.grid .head td{background:#7bd695;text-align:left;border-bottom:1px solid #7f7f7f}
.grid .head th{border-bottom:1px solid #7f7f7f}
.blank{border-right:0}

.sheetbar{height:28px;flex:none;display:flex;align-items:center;background:#e6e6e6;border-top:1px solid #a6a6a6;border-bottom:1px solid #c6c6c6;color:#bbb;font-size:16px}
.nav{width:28px;text-align:center;margin-left:1px}
.nav:first-child{margin-left:15px}
.stab{width:180px;height:26px;margin:-1px 0 0 27px;background:#fff;border-bottom:3px solid #217346;border-left:1px solid #a6a6a6;border-right:1px solid #a6a6a6;color:#217346;font:700 13.500px/24px Roboto,sans-serif;text-align:center}
.plus{margin-left:35px;fill:none;stroke:#777;stroke-width:1.300}
.status{height:22px;flex:none;display:flex;align-items:center;padding-left:7px;gap:20px;background:#f3f2f1;font-size:11.200px;border-bottom:1px solid #217346}
.status svg{margin-left:-3px}
```
